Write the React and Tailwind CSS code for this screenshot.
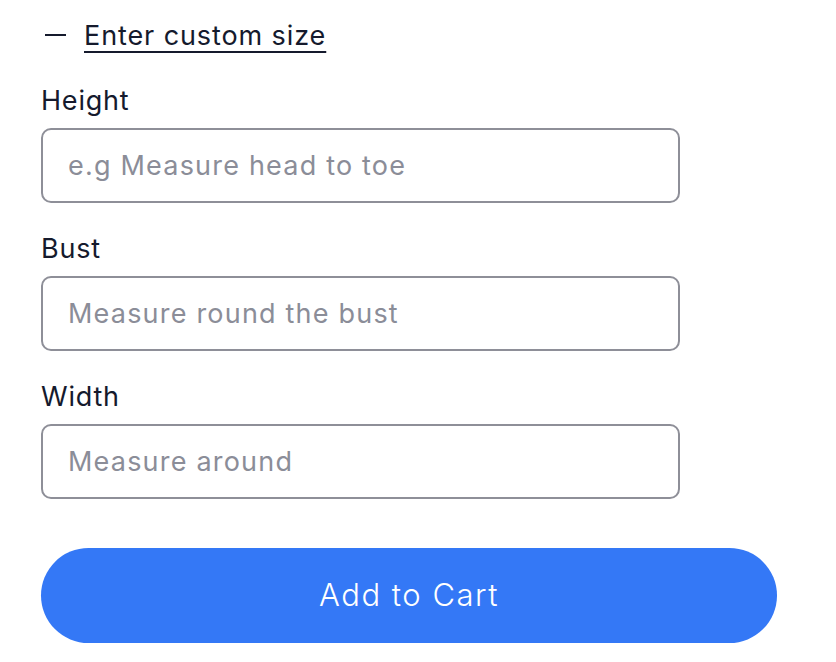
export default function App() {
  return (
    <div className="min-h-screen bg-white font-['Inter',sans-serif] text-[#151a2d]">
      <div className="pl-[41px] pr-[59px] pt-[14px]">
        {/* Custom size toggle */}
        <button className="flex items-center gap-[18px] h-[42px] cursor-pointer">
          <span className="block w-[21px] h-[2px] bg-[#151a2d] ml-[4px]" />
          <span className="text-[27px] leading-none tracking-[0.9px] underline underline-offset-[6px] decoration-[2px]">
            Enter custom size
          </span>
        </button>

        <div className="mt-[27px] flex flex-col">
          <Field label="Height" placeholder="e.g Measure head to toe" />
          <Field label="Bust" placeholder="Measure round the bust" />
          <Field label="Width" placeholder="Measure around" />
        </div>

        <button className="mt-[49px] w-full h-[95px] rounded-full bg-[#3478f6] text-white text-[31px] font-light tracking-[1.5px]">
          Add to Cart
        </button>
      </div>
    </div>
  );
}

function Field({ label, placeholder }) {
  return (
    <div className="mb-[28px] last:mb-0">
      <label className="block text-[27px] leading-[36px] tracking-[0.8px] mb-[9px]">{label}</label>
      <input
        type="text"
        placeholder={placeholder}
        className="w-[639px] h-[75px] rounded-[10px] border-2 border-[#8e8f98] px-[25px] text-[27px] tracking-[1.2px] placeholder:text-[#8b8d98] outline-none"
      />
    </div>
  );
}
